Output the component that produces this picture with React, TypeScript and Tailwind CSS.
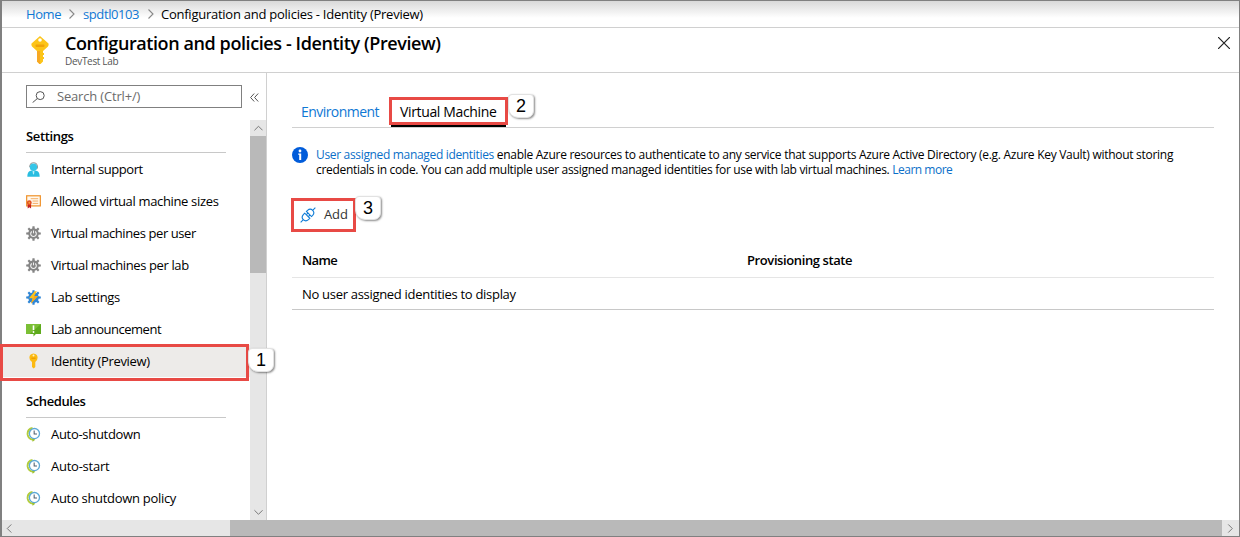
import React from "react";

const TONES = { gray: "#858585", blue: "#2f86d6" };

function KeyIcon({ className }: { className: string }) {
  return (
    <svg className={className} viewBox="0 0 18 28">
      <path d="M9 0 L17.5 7.5 Q18 9 17 10.5 L12 15 V25.5 L9.5 28 H8.5 L6 25.5 V15 L1 10.5 Q0 9 .5 7.5 Z" fill="#fcc419" />
      <path d="M6 15 H9 V28 H8.5 L6 25.5 Z" fill="#f7a823" />
      <rect x="4.5" y="8.5" width="9" height="2.5" rx="1" fill="#f0a30a" />
      <circle cx="9" cy="4" r="1.8" fill="#fff" />
      <path d="M12 17 h1 v2 h-1z M12 21 h1 v2 h-1z" fill="#fcc419" />
    </svg>
  );
}

function SmallKeyIcon() {
  return (
    <svg className="size-4" viewBox="0 0 16 16">
      <path d="M7.5 .5 Q11.6 1 11.6 4.8 Q11.6 7.4 9.3 9 V14 L7.7 15.6 L6 14 V9 Q3.4 7.6 3.4 4.8 Q3.4 1 7.5 .5Z" fill="#fcba12" />
      <rect x="5.4" y="4.6" width="4.2" height="1.3" fill="#ee9d00" />
      <circle cx="7.5" cy="2.6" r="1" fill="#fff2c0" />
    </svg>
  );
}

function SupportIcon() {
  return (
    <svg className="size-[15px]" viewBox="0 0 16 16">
      <path d="M4 5.5 V4 Q4.4 .7 8 .7 Q11.8 .7 12.2 4 V7" fill="none" stroke="#8c8c8c" strokeWidth="1" />
      <path d="M1.4 15.6 Q1.4 9.6 5.2 9.2 H10.8 Q14.6 9.6 14.6 15.6Z" fill="#29bde0" />
      <circle cx="8" cy="5.6" r="3.9" fill="#35c5e8" />
      <path d="M7 9.5 H9 L8.6 12.5 L8 13.5 L7.4 12.5Z" fill="#b9effa" />
    </svg>
  );
}

function CertificateIcon() {
  return (
    <svg className="size-[15px]" viewBox="0 0 16 16">
      <rect x=".7" y="1.9" width="14.6" height="10.8" fill="#fff8ed" stroke="#f0932c" strokeWidth="1.3" />
      <path d="M5 5h8M7 7.5h6M7 10h6" stroke="#f4a95c" strokeWidth="1" />
      <path d="M1.8 10.5h3.6v5l-1.8-1.3-1.8 1.3z" fill="#c42222" />
      <circle cx="3.5" cy="9.3" r="2.6" fill="#e25021" />
      <circle cx="3.5" cy="9.3" r="1" fill="#f6a13a" />
    </svg>
  );
}

const TEETH = [0, 45, 90, 135, 180, 225, 270, 315];

function Gear({ color }: { color: string }) {
  return (
    <g fill={color}>
      <circle cx="8" cy="8" r="5.6" />
      {TEETH.map((a) => (
        <path key={a} d="M6.6 3.2 L6.9 .2 H9.1 L9.4 3.2Z" transform={`rotate(${a} 8 8)`} />
      ))}
    </g>
  );
}

function GearIcon() {
  return (
    <svg className="size-[15px]" viewBox="0 0 16 16">
      <Gear color={TONES.gray} />
      <path d="M6.2 5.8 A3 3 0 1 0 9.8 5.8" fill="none" stroke="#f0f0f0" strokeWidth="1.2" />
      <path d="M8 4.8v3" stroke="#f0f0f0" strokeWidth="1.1" />
    </svg>
  );
}

function BoltGearIcon() {
  return (
    <svg className="size-[15px]" viewBox="0 0 16 16">
      <Gear color={TONES.blue} />
      <path d="M9.2 1.2 L3.2 8.8 H7 L5.2 14.6 L12.7 6.4 H8.8 L11.6 1.2Z" fill="#fdc21c" />
      <path d="M8.8 6.4h3.9L5.2 14.6z" fill="#f8a71c" />
    </svg>
  );
}

function AnnouncementIcon() {
  return (
    <svg className="size-[15px]" viewBox="0 0 16 16">
      <path d="M0 2 H16 V12.8 H10.5 L8 15.4 V12.8 H0Z" fill="#5eaa1c" />
      <path d="M0 2 H16 L4 12.8 H0Z" fill="#7bbf35" />
      <path d="M8 3.6v5" stroke="#fff" strokeWidth="1.7" />
      <circle cx="8" cy="10.7" r="1" fill="#fff" />
    </svg>
  );
}

function ClockIcon() {
  return (
    <svg className="size-[15px]" viewBox="0 0 16 16">
      <path d="M7 1.1 Q1 2.4 1.8 8.4 Q2.6 12.8 7.4 13.5" fill="none" stroke="#b2cc3d" strokeWidth="2" />
      <path d="M6.4 11.5 L10 13.6 L7 15.8Z" fill="#9fc131" />
      <circle cx="9" cy="7" r="5.4" fill="#fff" stroke="#5da9d6" strokeWidth="1.4" />
      <path d="M8.7 3.6V7.4h3" fill="none" stroke="#4d5d6c" strokeWidth="1.1" />
    </svg>
  );
}

function PlugIcon() {
  return (
    <svg className="h-4 w-4" viewBox="0 0 16 16" fill="none" stroke="#0f7cd6" strokeWidth="1.1">
      <g transform="rotate(-45 8 8)">
        <path d="M-2.4 8H1.4M14.6 8h3.8" />
        <path d="M7 4.4H5Q1.4 4.6 1.4 8T5 11.6H7Z" />
        <path d="M9.4 4.4H11Q14.6 4.6 14.6 8T11 11.6H9.4Z" />
        <path d="M7 6.6h2.4M7 9.4h2.4" />
      </g>
    </svg>
  );
}

function Chevron({ d, className }: { d: string; className: string }) {
  return (
    <svg className={className} viewBox="0 0 10 10" fill="none" stroke="currentColor" strokeWidth="1.1">
      <path d={d} />
    </svg>
  );
}

const RIGHT = "M2.5 .5 L7 5 L2.5 9.5";
const LEFT = "M7 .5 L2.5 5 L7 9.5";
const UP = "M.5 7 L5 2.5 L9.5 7";
const DOWN = "M.5 2.5 L5 7 L9.5 2.5";

function Callout({ n, className }: { n: number; className: string }) {
  return (
    <span
      className={`absolute z-20 flex h-6 w-[26px] items-center justify-center rounded-[4px] rounded-bl-[10px] rounded-br-[7px] border border-[#e2e2e2] bg-white pb-px font-['Liberation_Sans',sans-serif] text-[18px] leading-none tracking-normal text-black shadow-[1px_1px_2px_rgba(0,0,0,0.45)] ${className}`}
    >
      {n}
    </span>
  );
}

type Item = { label: string; icon: React.ReactNode; track: string; selected?: boolean };

const SETTINGS: Item[] = [
  { label: "Internal support", icon: <SupportIcon />, track: "tracking-[-0.42px]" },
  { label: "Allowed virtual machine sizes", icon: <CertificateIcon />, track: "tracking-[-0.34px]" },
  { label: "Virtual machines per user", icon: <GearIcon />, track: "tracking-[-0.41px]" },
  { label: "Virtual machines per lab", icon: <GearIcon />, track: "tracking-[-0.38px]" },
  { label: "Lab settings", icon: <BoltGearIcon />, track: "tracking-[-0.3px]" },
  { label: "Lab announcement", icon: <AnnouncementIcon />, track: "tracking-[-0.48px]" },
  { label: "Identity (Preview)", icon: <SmallKeyIcon />, track: "tracking-[-0.32px]", selected: true },
];

const SCHEDULES: Item[] = [
  { label: "Auto-shutdown", icon: <ClockIcon />, track: "tracking-[-0.3px]" },
  { label: "Auto-start", icon: <ClockIcon />, track: "tracking-[-0.25px]" },
  { label: "Auto shutdown policy", icon: <ClockIcon />, track: "tracking-[-0.3px]" },
];

function NavItem({ label, icon, track, selected }: Item) {
  return (
    <li className={`relative flex h-8 items-center pl-6 ${selected ? "bg-[#edebe9]" : ""}`}>
      <span className="w-[25px] shrink-0">{icon}</span>
      <span className={`whitespace-nowrap ${track}`}>{label}</span>
      {selected && (
        <>
          <span className="absolute -top-px -left-[2px] z-10 h-[37px] w-[249px] border-[3px] border-[#e84a45]" />
          <Callout n={1} className="top-[3px] left-[246px]" />
        </>
      )}
    </li>
  );
}

export default function App() {
  return (
    <div className="flex h-[537px] w-[1240px] flex-col border border-l-2 border-[#808080] bg-white font-['Open_Sans','Noto_Sans',sans-serif] text-[13px] leading-4 text-black">
      <nav className="flex h-[27px] shrink-0 items-center border-b border-[#d0d0d0] bg-linear-to-b from-[#d9d9d9] to-white to-65% pl-6 whitespace-nowrap">
        <a className="w-[35px] tracking-[-0.4px] text-[#0f78d4]">Home</a>
        <Chevron d={RIGHT} className="mr-[6px] ml-[6px] size-[10px] shrink-0 text-[#888]" />
        <a className="w-[56px] tracking-[-0.4px] text-[#0f78d4]">spdtl0103</a>
        <Chevron d={RIGHT} className="mr-[5px] ml-[7px] size-[10px] shrink-0 text-[#888]" />
        <span className="tracking-[-0.25px]">Configuration and policies - Identity (Preview)</span>
      </nav>

      <header className="flex h-[45px] shrink-0 border-b border-[#d0d0d0] pl-[29px]">
        <KeyIcon className="mt-2 h-7 w-[18px]" />
        <div className="ml-4 pt-1 whitespace-nowrap">
          <h1 className="text-[18px] leading-[23px] font-semibold tracking-[-0.41px]">
            Configuration and policies - Identity (Preview)
          </h1>
          <p className="text-[10px] leading-[12px] tracking-[-0.32px] text-[#555]">DevTest Lab</p>
        </div>
        <svg className="mt-[9px] mr-[9px] ml-auto size-3" viewBox="0 0 12 12" stroke="#222" strokeWidth="1.2">
          <path d="M0 0L12 12M12 0L0 12" />
        </svg>
      </header>

      <div className="flex h-[447px] shrink-0">
        <aside className="flex w-[265px] shrink-0 flex-col border-r border-[#d0d0d0]">
          <div className="flex h-[47px] shrink-0 items-start pt-3 pl-6">
            <div className="flex h-[23px] w-[216px] items-center border border-[#808080] pl-[5px] text-[#6b6b6b]">
              <svg className="h-3 w-[13px]" viewBox="0 0 13 12" fill="none" stroke="#555">
                <circle cx="8.2" cy="4.6" r="4" />
                <path d="M5.4 7.5L.6 11.6" />
              </svg>
              <span className="ml-3 pb-0.5 tracking-[-0.18px]">Search (Ctrl+/)</span>
            </div>
            <svg className="mt-2 ml-2 h-[9px] w-[9px]" viewBox="0 0 9 9" fill="none" stroke="#555">
              <path d="M4.2 .5L.6 4.5l3.6 4M8.2 .5L4.6 4.5l3.6 4" />
            </svg>
          </div>
          <div className="flex h-[400px]">
            <div className="w-[248px] shrink-0">
              <h2 className="ml-6 flex h-[33px] w-[200px] items-center border-b border-[#c8c8c8] font-semibold tracking-[-0.35px]">
                Settings
              </h2>
              <ul>{SETTINGS.map((i) => <NavItem key={i.label} {...i} />)}</ul>
              <h2 className="ml-6 flex h-[41px] w-[200px] items-center border-b border-[#c8c8c8] pt-2 font-semibold tracking-[-0.4px]">
                Schedules
              </h2>
              <ul>{SCHEDULES.map((i) => <NavItem key={i.label} {...i} />)}</ul>
            </div>
            <div className="flex w-4 shrink-0 flex-col items-center bg-[#e6e6e6] text-[#777]">
              <div className="flex h-4 items-center"><Chevron d={UP} className="size-[9px]" /></div>
              <div className="h-[137px] w-full bg-[#b9b9b9]" />
              <div className="mt-auto flex h-4 items-center"><Chevron d={DOWN} className="size-[9px]" /></div>
            </div>
          </div>
        </aside>

        <main className="flex-1 pr-[25px] pl-[25px]">
          <div className="flex h-[55px] items-end border-b border-[#d0d0d0] whitespace-nowrap">
            <a className="ml-[9px] h-[23px] w-[90px] text-[14px] tracking-[-0.55px] text-[#0f78d4]">Environment</a>
            <div className="relative flex h-7 w-[115px] border-b-2 border-black pt-[5px] pl-[9px] text-[14px] tracking-[-0.35px]">
              Virtual Machine
              <span className="absolute -top-[2px] -left-[2px] h-7 w-[119px] border-[3px] border-[#e84a45]" />
              <Callout n={2} className="-top-[5px] left-[117px]" />
            </div>
          </div>

          <div className="mt-[19px] flex gap-2">
            <svg className="size-4 shrink-0" viewBox="0 0 16 16">
              <circle cx="8" cy="8" r="8" fill="#015cda" />
              <path d="M6.2 6.5h3V13H7.2V7.8h-1z" fill="#fff" />
              <circle cx="8" cy="4" r="1.4" fill="#fff" />
            </svg>
            <p className="text-[12px] leading-[15px] whitespace-nowrap">
              <a className="tracking-[-0.33px] text-[#0b6fc8]">User assigned managed identities</a>
              <span className="tracking-[-0.28px]"> enable Azure resources to authenticate to any service that supports Azure Active Directory (e.g. Azure Key Vault) without storing</span>
              <br />
              <span className="tracking-[-0.31px]">credentials in code. You can add multiple user assigned managed identities for use with lab virtual machines. </span>
              <a className="tracking-[-0.5px] text-[#0b6fc8]">Learn more</a>
            </p>
          </div>

          <button className="relative mt-[21px] -ml-px flex h-[34px] w-[65px] items-center border-[3px] border-[#e84a45] pl-[6px]">
            <PlugIcon />
            <span className="ml-2 pb-0.5 tracking-[-0.1px] text-[#333]">Add</span>
            <Callout n={3} className="-top-[5px] left-[61px]" />
          </button>

          <div className="mt-[12px] w-full">
            <div className="grid h-[34px] grid-cols-[445px_1fr] items-center border-b border-[#e5e5e5] pb-0.5 pl-[10px] font-semibold tracking-[-0.4px]">
              <span className="tracking-[-0.6px]">Name</span>
              <span>Provisioning state</span>
            </div>
            <div className="flex h-8 items-center border-b border-[#c8c8c8] pl-[10px] tracking-[-0.3px]">
              No user assigned identities to display
            </div>
          </div>
        </main>
      </div>

      <div className="flex h-4 shrink-0 items-center bg-[#e6e6e6] text-[#777]">
        <Chevron d={LEFT} className="ml-[3px] size-[9px]" />
        <div className="ml-auto h-full w-[992px] bg-[#b9b9b9]" />
        <Chevron d={RIGHT} className="mx-1 size-[9px]" />
      </div>
    </div>
  );
}
